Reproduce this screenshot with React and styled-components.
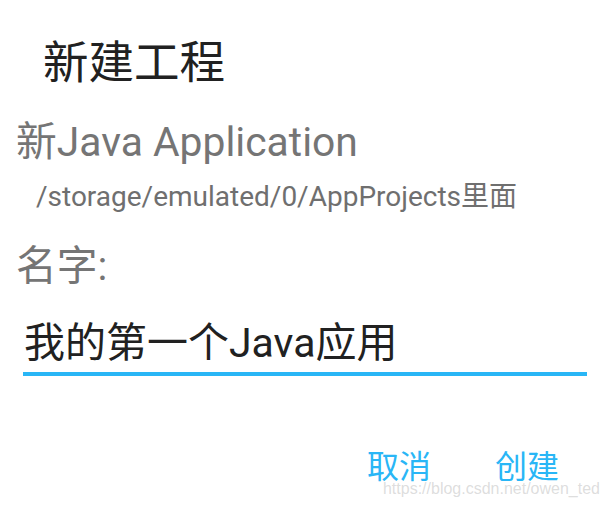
import React from "react";
import styled, { createGlobalStyle } from "styled-components";

const GlobalStyle = createGlobalStyle`
  html, body {
    margin: 0;
    padding: 0;
    background: #ffffff;
  }
  body {
    font-family: Roboto, "Noto Sans CJK SC", sans-serif;
  }
`;

const Dialog = styled.div`
  width: 608px;
  height: 506px;
  background: #ffffff;
  display: flex;
  flex-direction: column;
  position: relative;
  overflow: hidden;
`;

const Title = styled.h1`
  margin: 0;
  padding: 38px 0 0 43px;
  font-size: 45.5px;
  font-weight: 400;
  line-height: 52px;
  color: #212121;
`;

const Body = styled.div`
  display: flex;
  flex-direction: column;
  padding: 0 21px 0 16px;
`;

const Label = styled.div`
  margin-top: ${(p) => p.top}px;
  font-size: 40.8px;
  line-height: 48px;
  color: #757575;
`;

const PathText = styled.div`
  margin-top: 14px;
  padding-left: 20px;
  font-size: 28px;
  line-height: 34px;
  color: #6f6f6f;
`;

const Field = styled.div`
  margin-top: 29px;
  margin-left: 7px;
  padding: 0 0 5px 1px;
  font-size: 41px;
  line-height: 48px;
  color: #212121;
  border-bottom: 4px solid #29b6f6;
`;

const Actions = styled.div`
  display: flex;
  justify-content: flex-end;
  gap: 64px;
  margin-top: auto;
  padding: 0 49px 20px 0;
`;

const ActionButton = styled.button`
  border: none;
  background: none;
  padding: 0;
  font-family: Roboto, "Noto Sans CJK SC", sans-serif;
  font-size: 32px;
  line-height: 38px;
  color: #29b6f6;
  cursor: pointer;
`;

const Watermark = styled.span`
  position: absolute;
  right: 8px;
  bottom: 8px;
  font-family: "Liberation Sans", Arial, sans-serif;
  font-size: 16px;
  color: rgba(180, 180, 180, 0.45);
  pointer-events: none;
`;

export default function App() {
  return (
    <>
      <GlobalStyle />
      <Dialog>
        <Title>新建工程</Title>
        <Body>
          <Label top={28}>新Java Application</Label>
          <PathText>/storage/emulated/0/AppProjects里面</PathText>
          <Label top={28}>名字:</Label>
          <Field>我的第一个Java应用</Field>
        </Body>
        <Actions>
          <ActionButton>取消</ActionButton>
          <ActionButton>创建</ActionButton>
        </Actions>
        <Watermark>https://blog.csdn.net/owen_ted</Watermark>
      </Dialog>
    </>
  );
}
